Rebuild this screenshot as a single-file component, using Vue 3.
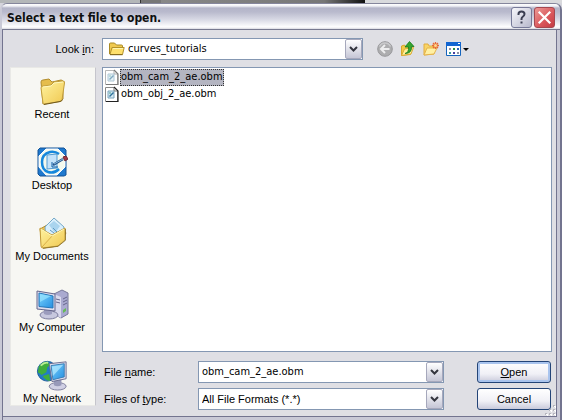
<template>
  <div class="screen">
    <div class="behind"><i></i><b></b></div>
    <form class="dialog" @submit.prevent>
      <header class="title">
        <h1>Select a text file to open.</h1>
        <button type="button" class="cap help" aria-label="Help">
          <svg width="19" height="19" viewBox="0 0 19 19">
            <path d="M6.500 7V6q0-2.500 3-2.500t3 2.500q0 1.500-1.500 2.500T9.500 11v1" fill="none" stroke="#3b3e52" stroke-width="2" />
            <path d="M8.500 13.500h2v2h-2z" fill="#3b3e52" />
          </svg>
        </button>
        <button type="button" class="cap close" aria-label="Close">
          <svg width="19" height="19" viewBox="0 0 19 19">
            <path d="M4.500 4.500l10 10M14.500 4.500l-10 10" stroke="#fff" stroke-width="2.200" stroke-linecap="square" />
          </svg>
        </button>
      </header>

      <main class="body">
        <div class="lookrow">
          <label for="look">Look <u>i</u>n:</label>
          <div class="combo look">
            <svg class="folder" width="17" height="16" viewBox="0 0 17 16">
              <path d="M1.500 13V3q0-1 1-1h4l2 2h5q1 0 1 1v3" fill="#f0c94f" stroke="#a98a25" />
              <path d="M2 13.500L4 6.500h12.200l-1.700 7z" fill="#ffe06c" stroke="#b3922b" />
              <path d="M5 7.500h10" stroke="#fff6b0" />
              <path d="M2 13.700h12.500" stroke="#80661b" />
            </svg>
            <select id="look" v-model="folder">
              <option>curves_tutorials</option>
            </select>
            <span class="arrow"><svg width="9" height="7" viewBox="0 0 9 7"><path d="M1 1l3.500 3.500L8 1" /></svg></span>
          </div>
          <div class="tools">
            <button type="button" disabled aria-label="Back">
              <svg width="18" height="18" viewBox="0 0 18 18">
                <circle cx="9" cy="9" r="7.300" fill="#adadaf" stroke="#98989b" />
                <path d="M3.500 6.500a6 6 0 0 1 11 0" fill="none" stroke="#c9c9cb" stroke-width="1.500" />
                <path d="M13.500 9H5.500M9 5L5 9l4 4" fill="none" stroke="#ededee" stroke-width="2" />
              </svg>
            </button>
            <button type="button" aria-label="Up one level">
              <svg width="18" height="18" viewBox="0 0 18 18">
                <path d="M2.500 15.500V6l3-1 1 1.500 5-1v9z" fill="#f2ca47" stroke="#d7a52c" />
                <path d="M2.500 15.500l3-6.500 9-1.500-2.500 6.500z" fill="#fff09a" stroke="#d9ab35" />
                <path d="M6 13.500q4-1 3.500-6.500H6l4.500-5.500L15 6.500h-2.500q.5 7-6.500 7z" fill="#35a62e" stroke="#187a1b" stroke-width=".8" />
              </svg>
            </button>
            <button type="button" aria-label="Create new folder">
              <svg width="18" height="18" viewBox="0 0 18 18">
                <path d="M2 15V4h4l1 2h5v8z" fill="#f8d467" stroke="#e2ac3f" />
                <path d="M2 15l3-7h10l-3 6z" fill="#fff0a3" stroke="#e5b34b" />
                <path d="M13.500 2v7M10 5.500h7M11 3l5 5M16 3l-5 5" stroke="#e86b35" stroke-width="1.300" />
                <circle cx="13.500" cy="5.500" r="1.500" fill="#ffd88a" />
              </svg>
            </button>
            <button type="button" class="views" aria-label="View menu">
              <svg width="24" height="18" viewBox="0 0 24 18">
                <path d="M1.500 3h14v12.500h-14z" fill="#fff" stroke="#1464bd" />
                <path d="M1 2h15v4H1z" fill="#1265d1" />
                <path d="M13 3h2v1h-2z" fill="#fff" />
                <path d="M4 8h2v2H4z" fill="#8b8fa5" />
                <path d="M8 8h2v2H8z" fill="#2c8d44" />
                <path d="M12 8h2v2h-2z" fill="#2a61b5" />
                <path d="M4 12h2v2H4z" fill="#3a9b9b" />
                <path d="M8 12h2v2H8z" fill="#473f9e" />
                <path d="M12 12h2v2h-2z" fill="#8b8fa5" />
                <path d="M18 8h6l-3 3z" fill="#000" />
              </svg>
            </button>
          </div>
        </div>

        <nav class="places">
          <button v-for="p in places" :key="p" type="button">
            <svg v-if="p === 'Recent'" width="32" height="32" viewBox="0 0 32 32">
              <path d="M5 7q0-2 2-2l6-1 3 3 9-2q2 0 2 2v17L7 29z" fill="#e5bd4c" stroke="#b18c2d" />
              <path d="M5 13q0-2 2-2l8-1 3-3 9-1q2 0 1.500 2L26 25q0 1-2 1.500L8 29q-1 0-1-1z" fill="url(#gold)" stroke="#c29e3c" />
              <path d="M7 12l8-1 3-3 9-1" fill="none" stroke="#fff7bd" />
              <path d="M8 29.500l16-3q2-.5 2.500-2" fill="none" stroke="#70591c" />
            </svg>
            <svg v-else-if="p === 'Desktop'" width="32" height="32" viewBox="0 0 32 32">
              <path d="M4 2h24l2 2v25l-2 1H4l-2-2V4z" fill="#1f79ce" stroke="#125396" />
              <path d="M10 3h12l7 7v11l-8 8H10l-7-8V10z" fill="#f4f9ee" stroke="#fff" />
              <path d="M23 8q-4-3-9-2-8 2-8 10t6 10q6 2 11-3" fill="none" stroke="#1688dc" stroke-width="2.500" />
              <path d="M11 9l10-1v14l-10 1z" fill="#c4e3fa" stroke="#549bd0" />
              <path d="M16 16v5h6" fill="none" stroke="#1260a6" />
              <path d="M17 19L27 13" stroke="#24558c" stroke-width="2.500" />
              <path d="M18 18l9-5" stroke="#87b9dd" />
              <path d="M27 11l3-1 2 3-3 2z" fill="#a53543" stroke="#6c2733" />
            </svg>
            <svg v-else-if="p === 'My Documents'" width="32" height="32" viewBox="0 0 32 32">
              <path d="M4 12l16-9 10 13-8 13-15 2z" fill="#eec455" stroke="#b58c2d" />
              <path d="M9 10l9-9 10 9-5 14-13-2z" fill="#d9effc" stroke="#75a9c8" />
              <path d="M13 8l5-4 6 5-5 7z" fill="#a9d4ee" />
              <path d="M14 13l4 3M17 11l4 4" stroke="#5e99c2" />
              <path d="M4 11l12 7 13-7v12l-7 6-15 2q-2 0-2-2z" fill="url(#gold)" stroke="#c39b37" />
              <path d="M6 30l11-12" fill="none" stroke="#d8ae49" />
              <path d="M5 12l11 7 12-7" fill="none" stroke="#fff7b9" />
              <path d="M7 31.300l15-2 7.500-6V12" fill="none" stroke="#88702b" stroke-width=".8" />
            </svg>
            <svg v-else-if="p === 'My Computer'" width="36" height="32" viewBox="0 0 36 32">
              <path d="M20 6l8-4 6 3v21l-7 4-7-4z" fill="#aaaad0" stroke="#777899" />
              <path d="M20 6l7 3v21l-7-4z" fill="#d9d9ec" />
              <path d="M22 11l4 1M22 14l4 1M29 11l4-2M29 14l4-2M29 17l4-2" stroke="#66668c" />
              <path d="M29 22l3-2v3l-3 2z" fill="#65bb57" />
              <ellipse cx="15" cy="27" rx="9" ry="4" fill="#c7c8de" stroke="#7b7c9d" />
              <path d="M10 20h8v6q-4 2-8 0z" fill="#9b9cbd" />
              <path d="M3 3l18 3v17L3 21z" fill="#dedeee" stroke="#66678c" />
              <path d="M5 5l14 3v12L5 18.500z" fill="url(#blue)" stroke="#2475b8" />
              <path d="M6 6l11 2L6 14z" fill="#9be5ff" opacity=".7" />
            </svg>
            <svg v-else width="34" height="34" viewBox="0 0 34 34">
              <circle cx="12" cy="13" r="10.500" fill="#227bc6" stroke="#1d5c9a" />
              <path d="M3 8q4-6 9-5l3 3-3 3-1 5-5 3-4-3zM7 18l7-2 1 7q-5 0-8-5z" fill="#3fae3c" />
              <path d="M5 7q4-4 8-3" fill="none" stroke="#b9ed94" stroke-width="2" />
              <ellipse cx="23" cy="29" rx="9" ry="4" fill="#d0d0e4" stroke="#7c7c9b" />
              <path d="M19 21h8v7q-4 2-8 0z" fill="#9799b9" />
              <path d="M14 5l18-2v18l-15 3z" fill="#dedeed" stroke="#6b6d8f" />
              <path d="M16 7l14-2v14l-12 3z" fill="url(#blue)" stroke="#3b7db2" />
              <path d="M17 8l12-2-11 12z" fill="#b9edff" opacity=".7" />
            </svg>
            <span>{{ p }}</span>
          </button>
        </nav>

        <ul class="files">
          <li v-for="f in files" :key="f">
            <button type="button" :class="{ on: f === name }" @click="name = f">
              <svg width="16" height="17" viewBox="0 0 16 17">
                <path d="M1.500 1.500h9l3 3v11h-12z" fill="#fff" stroke="#888" />
                <path d="M10 1l4 4v10.500H2" fill="none" stroke="#222" stroke-width="1.200" />
                <path d="M10 2v3h3" fill="none" stroke="#777" />
                <path d="M4 5h6v7H4z" fill="#d5e8f2" stroke="#7aa4bc" />
                <path d="M5 10l4-4 1 1-4 4z" fill="#2d7199" />
                <path d="M5 7h2" stroke="#4aa18f" />
              </svg>
              <span>{{ f }}</span>
            </button>
          </li>
        </ul>

        <div class="fields">
          <label for="name">File <u>n</u>ame:</label>
          <div class="combo">
            <input id="name" v-model="name" type="text" />
            <button type="button" class="arrow" aria-label="Show file names"><svg width="9" height="7" viewBox="0 0 9 7"><path d="M1 1l3.500 3.500L8 1" /></svg></button>
          </div>
          <button type="submit" class="push primary"><span><u>O</u>pen</span></button>
          <label for="kind">Files of <u>t</u>ype:</label>
          <div class="combo kind">
            <select id="kind" v-model="kind">
              <option>All File Formats (*.*)</option>
            </select>
            <span class="arrow"><svg width="9" height="7" viewBox="0 0 9 7"><path d="M1 1l3.500 3.500L8 1" /></svg></span>
          </div>
          <button type="button" class="push">Cancel</button>
        </div>
      </main>

      <svg class="grip" width="12" height="12" viewBox="0 0 12 12">
        <path d="M9 1h2v2H9zM5 5h2v2H5zM9 5h2v2H9zM1 9h2v2H1zM5 9h2v2H5zM9 9h2v2H9z" fill="#b5b5bd" />
        <path d="M10 2h2v2h-1V3h-1zM6 6h2v2H7V7H6zM10 6h2v2h-1V7h-1zM2 10h2v2H3v-1H2zM6 10h2v2H7v-1H6zM10 10h2v2h-1v-1h-1z" fill="#fff" />
      </svg>
    </form>

    <!-- shared gradients -->
    <svg class="defs" width="0" height="0">
      <linearGradient id="gold" x1="0" y1="0" x2="1" y2="1">
        <stop offset="0" stop-color="#fff3a0" />
        <stop offset="1" stop-color="#f0c850" />
      </linearGradient>
      <linearGradient id="blue" x1="0" y1="0" x2="1" y2="1">
        <stop offset="0" stop-color="#7ad4ff" />
        <stop offset="1" stop-color="#268ee0" />
      </linearGradient>
    </svg>
  </div>
</template>

<script setup>
import { ref } from 'vue'

const places = ['Recent', 'Desktop', 'My Documents', 'My Computer', 'My Network']
const files = ['obm_cam_2_ae.obm', 'obm_obj_2_ae.obm']

const folder = ref('curves_tutorials')
const name = ref(files[0])
const kind = ref('All File Formats (*.*)')
</script>

<style>
body { margin: 0; background: #d5d5dc; }
</style>

<style scoped>
* { box-sizing: border-box; }
.screen { min-height: 100vh; display: flex; flex-direction: column; font: 11px/14px "Liberation Sans", Arial, sans-serif; color: #000; }
button, input, select { font: inherit; color: inherit; margin: 0; padding: 0; border: 0; background: none; border-radius: 0; }
svg { display: block; flex: none; }
.behind { height: 3px; display: flex; background: #b4b7b9; }
.behind i { width: 25%; border-right: 1px solid #333; }
.behind b { width: 40%; background: linear-gradient(90deg, #888, #777 80%, #111); margin-right: auto; border-left: 20px solid #777; }
.behind::after { content: ""; width: 35%; background: #d9dadd; }
.dialog { flex: 1; display: flex; flex-direction: column; position: relative; background: #dfdfe4; border: 2px solid #73748f; border-top: 1px solid #85869c; border-left-color: #c9c9d6; border-radius: 7px 7px 0 0; box-shadow: inset 1px 0 #73748f, inset -3px -3px #c9c9d6, inset -4px -4px #73748f; }
.title { height: 26px; display: flex; align-items: center; gap: 2px; padding: 2px 5px 0 5px; border-radius: 5px 5px 0 0; border-bottom: 1px solid #777990; background: linear-gradient(#fff 0, #f0f0f6 2px, #b4b5c9 4px, #b9bacd 8px, #dadbe6 16px, #fff 23px, #c5c5d1 26px); }
h1 { flex: 1; margin: 0; font: bold 12px/18px "DejaVu Sans Condensed", Tahoma, sans-serif; color: #0e1010; }
.cap { width: 21px; height: 21px; border: 1px solid #777a99; border-radius: 3px; background: linear-gradient(135deg, #f7f7fb, #b8b9cd); }
.cap.close { border-color: #a5474f; background: linear-gradient(135deg, #ec9a96, #d9555a 60%, #c43c44); }
.body { flex: 1; display: grid; grid-template-columns: 86px 1fr; grid-template-rows: 22px 1fr 58px; column-gap: 6px; padding: 8px 8px 10px; }
.lookrow { grid-column: 1 / 3; display: grid; grid-template-columns: 86px minmax(120px, 261px) auto; column-gap: 6px; align-items: center; }
.lookrow label { text-align: right; padding-right: 2px; }
.combo { position: relative; height: 22px; background: #fff; border: 1px solid #8497b2; display: flex; font-family: "DejaVu Sans Condensed", Tahoma, sans-serif; }
.combo input, .combo select { width: 100%; min-width: 0; padding: 0 20px 0 3px; outline: 0; appearance: none; }
.combo.look select { padding-left: 25px; }
.combo.kind { font-family: inherit; }
.folder { position: absolute; left: 5px; top: 2px; pointer-events: none; }
.arrow, button.arrow { position: absolute; right: 0; top: 0; width: 17px; height: 20px; display: flex; align-items: center; justify-content: center; border: 1px solid #a6a8bc; border-radius: 2px; background: linear-gradient(#fff, #c5c6d6); }
span.arrow { pointer-events: none; }
.arrow path { fill: none; stroke: #34363f; stroke-width: 2; }
.tools { display: flex; gap: 5px; padding-left: 7px; }
.places { grid-row: 2 / 4; grid-column: 1; margin-top: 7px; margin-bottom: 4px; background: #f7f7f3; border: 1px solid #e9e9e6; border-right-color: #c5c5cc; display: flex; flex-direction: column; overflow: hidden; }
.places button { height: 71px; flex: none; display: flex; flex-direction: column; align-items: center; padding: 7px 2px 0 0; }
.places button:last-child { height: 53px; }
.places svg { height: 32px; }
.files { margin: 7px 0 0; padding: 1px; list-style: none; background: #fff; border: 1px solid #8497b2; min-height: 120px; font-family: "DejaVu Sans Condensed", Tahoma, sans-serif; }
.files button { display: flex; align-items: center; }
.files button span { border: 1px dotted transparent; padding-bottom: 1px; }
.files .on span { background: #b4b5c1; border-color: #333; }
.files .on svg { opacity: 0.6; }
.fields { display: grid; grid-template-columns: 88px minmax(100px, 1fr) 101px; grid-template-rows: 22px 22px; gap: 5px 6px; align-items: center; align-self: end; padding: 0 1px 0 2px; }
.push { justify-self: end; width: 74px; height: 22px; border: 1px solid #234477; border-radius: 3px; background: linear-gradient(#fff, #f0f0f6 60%, #c9cadb); }
.push.primary { box-shadow: inset 0 0 0 2px #a9c4ee; }
.grip { position: absolute; right: 4px; bottom: 4px; }
.defs { position: absolute; }
</style>
